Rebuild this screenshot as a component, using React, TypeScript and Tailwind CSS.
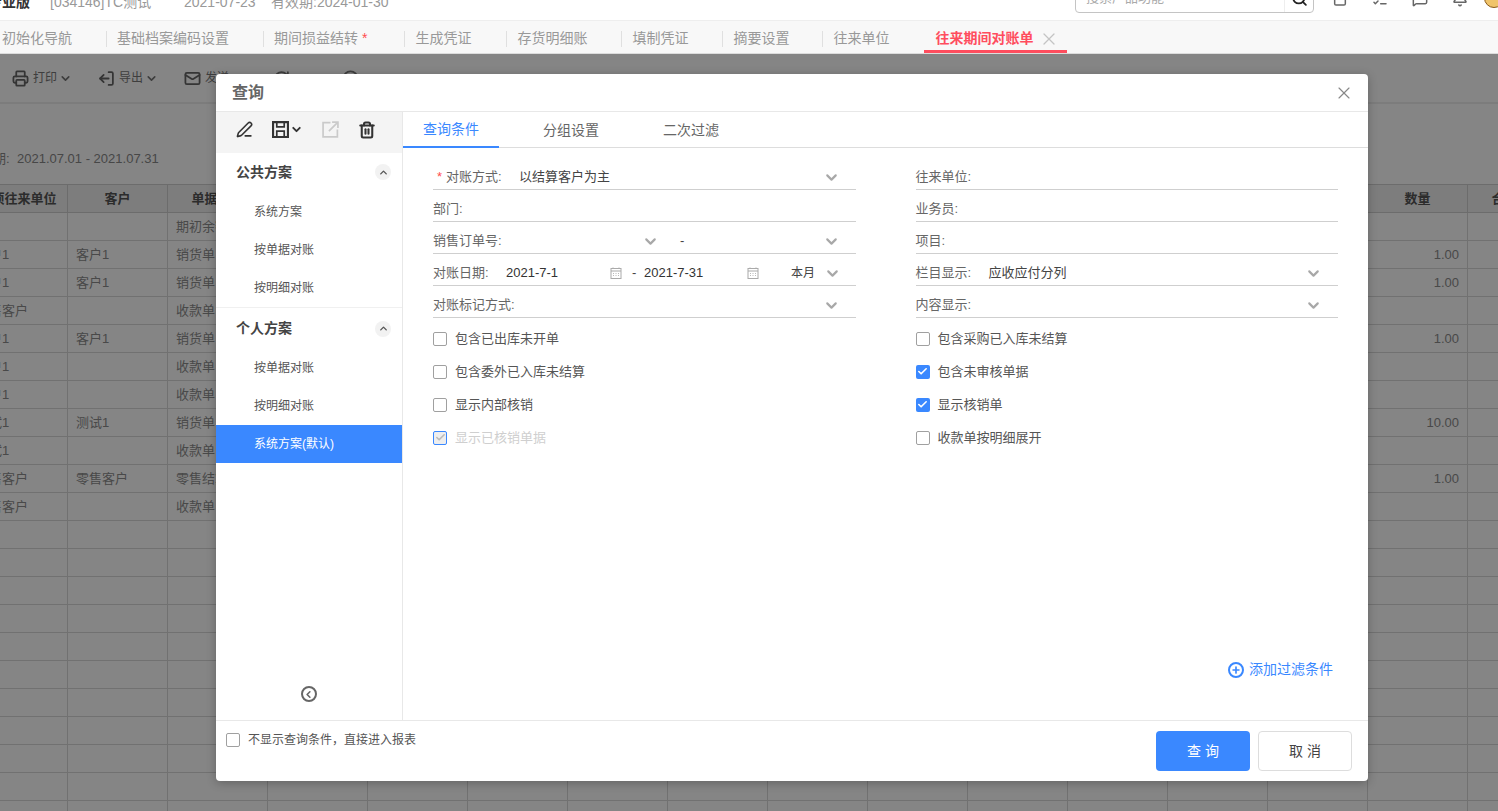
import { Bell, ChevronDown, ChevronLeft, ChevronUp, ListChecks, LogOut, Mail, MessageSquare, PenLine, Plus, Printer, RefreshCw, Search, Trash2, X, CircleX, Check, Archive } from 'lucide-react'

const TABS = [
  { label: '初始化导航', cls: 'pl-[2px] pr-[34px]' },
  { label: '基础档案编码设置', cls: 'pl-[10px] pr-[34px]' },
  { label: '期间损益结转', cls: 'pl-[10px] pr-[37px]', star: true },
  { label: '生成凭证', cls: 'pl-[10px] pr-[35px]' },
  { label: '存货明细账', cls: 'pl-[10px] pr-[34px]' },
  { label: '填制凭证', cls: 'pl-[10px] pr-[34px]' },
  { label: '摘要设置', cls: 'pl-[10px] pr-[33px]' },
  { label: '往来单位', cls: 'pl-[10px] pr-[35px]', last: true },
]

const ROWS = [
  ['', '', '期初余额', ''],
  ['客户1', '客户1', '销货单', '1.00'],
  ['客户1', '客户1', '销货单', '1.00'],
  ['零售客户', '', '收款单', ''],
  ['客户1', '客户1', '销货单', '1.00'],
  ['客户1', '', '收款单', ''],
  ['客户1', '', '收款单', ''],
  ['测试1', '测试1', '销货单', '10.00'],
  ['测试1', '', '收款单', ''],
  ['零售客户', '零售客户', '零售结算', '1.00'],
  ['零售客户', '', '收款单', ''],
  ...Array.from({ length: 11 }, () => ['', '', '', '']),
]

const MIDDLE_COLS = Array.from({ length: 11 }, (_, i) => i)

function TableRow({ row }: { row: string[] }) {
  return (
    <div className="flex h-[28px] text-[13px] text-[#8c8c8c]">
      <div className="w-[100px] shrink-0 border-r border-b border-[#d8d8d8] pl-[8px] leading-[27px]">{row[0]}</div>
      <div className="w-[100px] shrink-0 border-r border-b border-[#d8d8d8] pl-[8px] leading-[27px]">{row[1]}</div>
      <div className="w-[100px] shrink-0 border-r border-b border-[#d8d8d8] pl-[8px] leading-[27px]">{row[2]}</div>
      {MIDDLE_COLS.map(i => (
        <div key={i} className="w-[100px] shrink-0 border-r border-b border-[#d8d8d8]" />
      ))}
      <div className="w-[100px] shrink-0 border-r border-b border-[#d8d8d8] pr-[8px] text-right leading-[27px]">{row[3]}</div>
      <div className="w-[100px] shrink-0 border-r border-b border-[#d8d8d8]" />
    </div>
  )
}

function HeadCell({ children }: { children?: string }) {
  return (
    <div className="w-[100px] shrink-0 border-r border-b border-[#d0d0d0] text-center leading-[27px] whitespace-nowrap">
      {children}
    </div>
  )
}

function Chevron({ className = '' }: { className?: string }) {
  return <ChevronDown className={`h-[17px] w-[17px] shrink-0 text-[#a8a8a8] ${className}`} strokeWidth={3} />
}

function CalendarIcon() {
  return (
    <svg viewBox="0 0 12 12" className="h-[12px] w-[12px] shrink-0 text-[#aaa]" fill="none" stroke="currentColor" strokeWidth="1">
      <rect x="1" y="1.5" width="10" height="10" />
      <path d="M1 4h10M3 0.5v1.5M9 0.5v1.5" />
      <path d="M3 6.5h1M5.5 6.5h1M8 6.5h1M3 8.5h1M5.5 8.5h1M8 8.5h1" strokeWidth="0.8" />
    </svg>
  )
}

function SaveIcon() {
  return (
    <svg viewBox="0 0 16 16" className="ml-[19px] h-[17px] w-[17px] shrink-0" fill="none" stroke="currentColor" strokeWidth="2">
      <path d="M1 1h14v14H1z" />
      <path d="M4.5 1v4.5h7V1M4.5 15V9.5h7V15" strokeWidth="1.6" />
    </svg>
  )
}

function ShareIcon() {
  return (
    <svg viewBox="0 0 16 16" className="ml-[19px] h-[17px] w-[17px] shrink-0 text-[#cacaca]" fill="none" stroke="currentColor" strokeWidth="1.6">
      <path d="M8 1.5H1v13.500h13.500V8" />
      <path d="M6.500 9.500L14.500 1.500M9.500 1h5.500v5.500" />
    </svg>
  )
}

function FormRow({ children }: { children: React.ReactNode }) {
  return <div className="flex h-[32px] items-center border-b border-[#cfcfcf] pt-[7px] text-[13px] whitespace-nowrap text-[#666]">{children}</div>
}

function CheckRow({ label, checked, disabled }: { label: string; checked?: boolean; disabled?: boolean }) {
  let box = 'border border-[#a0a0a0] bg-white'
  if (checked) box = 'bg-[#3a88ff]'
  if (disabled) box = 'border border-[#3a88ff] bg-[#eeeeee]'
  return (
    <div className="flex h-[33px] items-center gap-[8px] text-[13px]">
      <span className={`flex h-[14px] w-[14px] shrink-0 items-center justify-center rounded-[2px] ${box}`}>
        {(checked || disabled) && (
          <Check className={`h-[11px] w-[11px] ${disabled ? 'text-[#bbb]' : 'text-white'}`} strokeWidth={3.5} />
        )}
      </span>
      <span className={disabled ? 'text-[#cfcfcf]' : 'text-[#555]'}>{label}</span>
    </div>
  )
}

function SectionHead({ title, className }: { title: string; className: string }) {
  return (
    <div className={`flex items-center justify-between pr-[11px] pl-[20px] ${className}`}>
      <span className="text-[14px] font-bold text-[#444]">{title}</span>
      <span className="flex h-[16px] w-[16px] items-center justify-center rounded-full bg-[#f2f2f2]">
        <ChevronUp className="h-[11px] w-[11px] text-[#555]" strokeWidth={3} />
      </span>
    </div>
  )
}

function SideItem({ label, active }: { label: string; active?: boolean }) {
  return (
    <div className={`flex h-[38px] items-center pl-[38px] text-[12px] ${active ? 'bg-[#3a88ff] text-white' : 'text-[#555]'}`}>
      {label}
    </div>
  )
}

export default function App() {
  return (
    <div className="relative h-[811px] w-[1498px] overflow-hidden bg-white font-['Liberation_Sans','Noto_Sans_CJK_SC',sans-serif]">
      {/* top bar, cut off by the page edge */}
      <div className="flex h-[21px] items-end overflow-hidden border-b border-[#eeeeee] text-[14px]">
        <div className="mb-[8px] flex w-[50px] shrink-0 leading-[20px] whitespace-nowrap">
          <span className="-ml-[12px] font-bold text-[#333]">专业版</span>
        </div>
        <span className="mb-[8px] w-[134px] shrink-0 leading-[20px] text-[#999]">[034146]TC测试</span>
        <span className="mb-[8px] w-[87px] shrink-0 leading-[20px] text-[#999]">2021-07-23</span>
        <span className="mb-[8px] w-[804px] shrink-0 leading-[20px] text-[#999]">有效期:2024-01-30</span>
        <div className="mb-[7px] flex h-[30px] w-[239px] shrink-0 items-center rounded-[4px] border border-[#c4c4c4] text-[13px] text-[#aaa]">
          <span className="flex-1 pl-[10px]">搜索产品功能</span>
          <span className="flex h-full w-[29px] items-center justify-center border-l border-[#eee]">
            <Search className="h-[17px] w-[17px] text-[#222]" strokeWidth={2.5} />
          </span>
        </div>
        <div className="mb-[13px] ml-[18px] flex items-end gap-[24px] text-[#666]">
          <Archive className="h-[16px] w-[16px]" strokeWidth={2.25} />
          <ListChecks className="h-[16px] w-[16px]" strokeWidth={2.25} />
          <MessageSquare className="h-[16px] w-[16px]" strokeWidth={2.25} />
          <Bell className="h-[16px] w-[16px]" strokeWidth={2.25} />
        </div>
        <span className="mb-[12px] ml-[16px] h-[20px] w-[20px] shrink-0 rounded-full border border-[#8a5a1c] bg-[#f0c46a]" />
      </div>

      {/* open pages */}
      <div className="flex h-[33px] items-center border-b border-[#dcdcdc] bg-[#f8f8f8] text-[14px] text-[#999]">
        {TABS.map(tab => (
          <div key={tab.label} className={`mt-[3px] flex h-[16px] shrink-0 items-center ${tab.cls} ${tab.last ? '' : 'border-r border-[#e0e0e0]'}`}>
            {tab.label}
            {tab.star && <span className="ml-[4px] text-[#ff4d4f]">*</span>}
          </div>
        ))}
        <div className="flex h-[32px] w-[143px] shrink-0 items-center gap-[6px] self-start border-b-[3px] border-[#ff4d5e] pt-[6px] pl-[11px] font-bold text-[#ff4d5e]">
          往来期间对账单
          <X className="h-[20px] w-[20px] text-[#c4c4c4]" strokeWidth={1.5} />
        </div>
      </div>

      {/* report behind the dialog */}
      <div className="flex h-[50px] items-center border-b-2 border-[#eeeeee] pl-[12px] text-[12px] text-[#777]">
        <Printer className="h-[17px] w-[17px] text-[#666]" strokeWidth={2.5} />
        <span className="ml-[4px]">打印</span>
        <ChevronDown className="ml-[2px] h-[13px] w-[13px]" strokeWidth={3} />
        <LogOut className="ml-[26px] h-[17px] w-[17px] -scale-x-100 text-[#666]" strokeWidth={2.5} />
        <span className="ml-[4px]">导出</span>
        <ChevronDown className="ml-[2px] h-[13px] w-[13px]" strokeWidth={3} />
        <Mail className="ml-[26px] h-[17px] w-[17px] text-[#666]" strokeWidth={2.5} />
        <span className="ml-[4px]">发送</span>
        <RefreshCw className="ml-[44px] h-[17px] w-[17px]" strokeWidth={2.5} />
        <CircleX className="ml-[52px] h-[17px] w-[17px]" strokeWidth={2.5} />
      </div>
      <div className="flex h-[80px] items-center pt-[29px] text-[13px] whitespace-nowrap text-[#888]">
        <span className="-ml-[20px] w-[37px] shrink-0">日期:</span>
        <span>2021.07.01 - 2021.07.31</span>
      </div>
      <div className="-ml-[32px] border-t border-[#d0d0d0]">
        <div className="flex h-[28px] bg-[#f0f0f0] text-[13px] font-bold text-[#555]">
          <HeadCell>单项往来单位</HeadCell>
          <HeadCell>客户</HeadCell>
          <HeadCell>单据类型</HeadCell>
          {MIDDLE_COLS.map(i => (
            <HeadCell key={i} />
          ))}
          <HeadCell>数量</HeadCell>
          <HeadCell>合计金额</HeadCell>
        </div>
        {ROWS.map((row, i) => (
          <TableRow key={i} row={row} />
        ))}
      </div>

      {/* modal mask */}
      <div className="absolute inset-x-0 top-[54px] bottom-0 bg-black/[0.48]" />

      {/* query dialog */}
      <div className="absolute top-[74px] left-[216px] flex h-[707px] w-[1152px] flex-col rounded-[4px] bg-white shadow-[0_2px_10px_rgba(0,0,0,0.25)]">
        <div className="flex h-[38px] shrink-0 items-center justify-between border-b border-[#e8e8e8] pr-[14px] pl-[16px]">
          <span className="text-[16px] font-bold text-[#666]">查询</span>
          <X className="h-[20px] w-[20px] text-[#888]" strokeWidth={1.4} />
        </div>

        <div className="flex min-h-0 flex-1">
          <aside className="flex w-[187px] shrink-0 flex-col border-r border-[#e8e8e8]">
            <div className="flex h-[41px] shrink-0 items-center bg-[#f4f4f4] pb-[6px] pl-[20px] text-[#333]">
              <PenLine className="h-[17px] w-[17px]" strokeWidth={2.25} />
              <SaveIcon />
              <ChevronDown className="ml-[1px] h-[13px] w-[13px]" strokeWidth={3.5} />
              <ShareIcon />
              <Trash2 className="ml-[19px] h-[18px] w-[18px]" strokeWidth={2.75} />
            </div>
            <SectionHead title="公共方案" className="h-[40px] pb-[2px]" />
            <SideItem label="系统方案" />
            <SideItem label="按单据对账" />
            <SideItem label="按明细对账" />
            <div className="border-b border-[#f0f0f0]" />
            <SectionHead title="个人方案" className="h-[41px]" />
            <SideItem label="按单据对账" />
            <SideItem label="按明细对账" />
            <SideItem label="系统方案(默认)" active />
            <div className="mt-auto flex justify-center pr-[1px] pb-[18px]">
              <span className="flex h-[16px] w-[16px] items-center justify-center rounded-full border-2 border-[#666]">
                <ChevronLeft className="h-[11px] w-[11px] text-[#666]" strokeWidth={3.5} />
              </span>
            </div>
          </aside>

          <div className="flex min-w-0 flex-1 flex-col">
            <div className="flex h-[36px] shrink-0 gap-[24px] border-b border-[#dddddd] text-[14px] text-[#666]">
              <div className="-mb-px flex h-[36px] w-[96px] items-center justify-center border-b-2 border-[#3a88ff] pt-[1px] text-[#3a88ff]">查询条件</div>
              <div className="flex h-[35px] w-[96px] items-center justify-center pt-[1px]">分组设置</div>
              <div className="flex h-[35px] w-[96px] items-center justify-center pt-[1px]">二次过滤</div>
            </div>

            <div className="grid grid-cols-2 gap-x-[60px] pt-[10px] pr-[30px] pl-[30px]">
              <div>
                <FormRow>
                  <span className="ml-[4px] w-[9px] text-[#ff4d4f]">*</span>
                  <span className="w-[73px]">对账方式:</span>
                  <span className="flex-1 text-[#444]">以结算客户为主</span>
                  <Chevron className="mr-[16px]" />
                </FormRow>
                <FormRow>部门:</FormRow>
                <FormRow>
                  <span className="flex w-[226px] shrink-0 items-center justify-between">
                    销售订单号:
                    <Chevron />
                  </span>
                  <span className="ml-[21px] flex-1 text-[#444]">-</span>
                  <Chevron className="mr-[16px]" />
                </FormRow>
                <FormRow>
                  <span className="w-[73px]">对账日期:</span>
                  <span className="w-[104px] text-[#333]">2021-7-1</span>
                  <CalendarIcon />
                  <span className="ml-[10px] w-[12px] text-[#444]">-</span>
                  <span className="w-[103px] text-[#333]">2021-7-31</span>
                  <CalendarIcon />
                  <span className="ml-[32px] w-[33px] text-[12px] text-[#444]">本月</span>
                  <Chevron />
                </FormRow>
                <FormRow>
                  <span className="flex-1">对账标记方式:</span>
                  <Chevron className="mr-[16px]" />
                </FormRow>
                <div className="mt-[4px]">
                  <CheckRow label="包含已出库未开单" />
                  <CheckRow label="包含委外已入库未结算" />
                  <CheckRow label="显示内部核销" />
                  <CheckRow label="显示已核销单据" checked disabled />
                </div>
              </div>
              <div>
                <FormRow>往来单位:</FormRow>
                <FormRow>业务员:</FormRow>
                <FormRow>项目:</FormRow>
                <FormRow>
                  <span className="w-[73px]">栏目显示:</span>
                  <span className="flex-1 text-[#444]">应收应付分列</span>
                  <Chevron className="mr-[16px]" />
                </FormRow>
                <FormRow>
                  <span className="flex-1">内容显示:</span>
                  <Chevron className="mr-[16px]" />
                </FormRow>
                <div className="mt-[4px]">
                  <CheckRow label="包含采购已入库未结算" />
                  <CheckRow label="包含未审核单据" checked />
                  <CheckRow label="显示核销单" checked />
                  <CheckRow label="收款单按明细展开" />
                </div>
              </div>
            </div>

            <div className="mt-auto flex items-center justify-end gap-[5px] pr-[35px] pb-[40px] text-[14px] text-[#3a88ff]">
              <span className="flex h-[16px] w-[16px] items-center justify-center rounded-full border-2 border-[#3a88ff]">
                <Plus className="h-[10px] w-[10px]" strokeWidth={4} />
              </span>
              添加过滤条件
            </div>
          </div>
        </div>

        <div className="flex h-[61px] shrink-0 items-start justify-between border-t border-[#e8e8e8] pt-[10px] pr-[16px] pl-[10px]">
          <div className="flex h-[18px] items-center gap-[8px] text-[12px] text-[#555]">
            <span className="h-[14px] w-[14px] rounded-[2px] border border-[#a0a0a0]" />
            不显示查询条件，直接进入报表
          </div>
          <div className="flex gap-[8px] text-[14px]">
            <button className="h-[40px] w-[94px] rounded-[4px] bg-[#3a88ff] pl-[4px] tracking-[4px] text-white">查询</button>
            <button className="h-[40px] w-[94px] rounded-[4px] border border-[#dddddd] bg-white pl-[4px] tracking-[4px] text-[#444]">取消</button>
          </div>
        </div>
      </div>
    </div>
  )
}
